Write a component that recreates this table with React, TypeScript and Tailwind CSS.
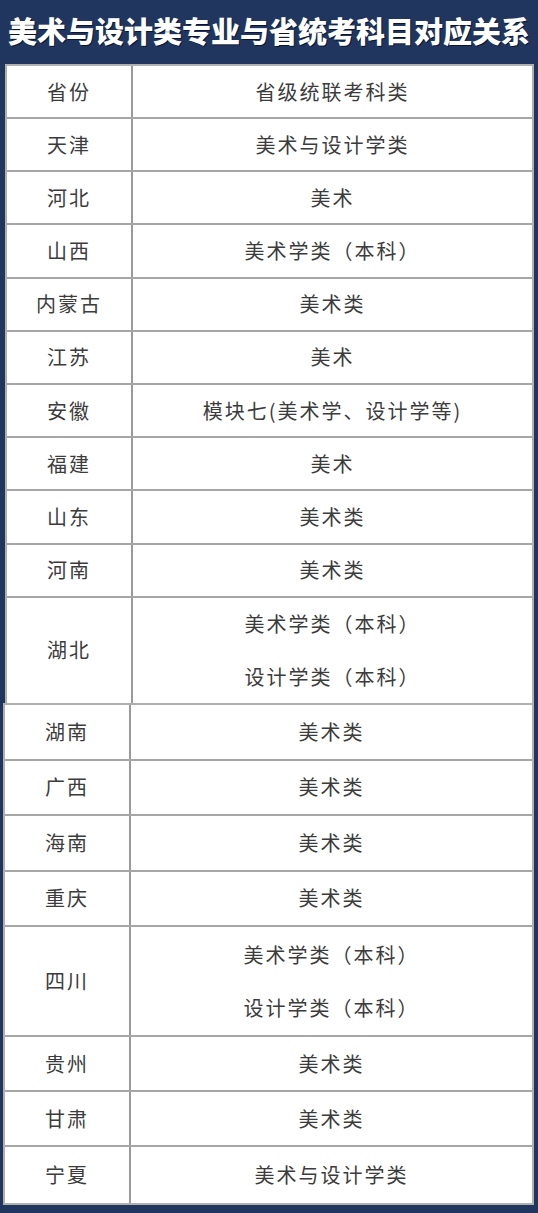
import React from "react";

type Row = { p: string; v: string[]; h: string };

const block1: Row[] = [
  { p: "天津", v: ["美术与设计学类"], h: "h-[53.2px]" },
  { p: "河北", v: ["美术"], h: "h-[53.2px]" },
  { p: "山西", v: ["美术学类（本科）"], h: "h-[53.2px]" },
  { p: "内蒙古", v: ["美术类"], h: "h-[53.2px]" },
  { p: "江苏", v: ["美术"], h: "h-[53.2px]" },
  { p: "安徽", v: ["模块七(美术学、设计学等)"], h: "h-[53.2px]" },
  { p: "福建", v: ["美术"], h: "h-[53.2px]" },
  { p: "山东", v: ["美术类"], h: "h-[53.2px]" },
  { p: "河南", v: ["美术类"], h: "h-[53.2px]" },
  { p: "湖北", v: ["美术学类（本科）", "设计学类（本科）"], h: "h-[105px]" },
];

const block2: Row[] = [
  { p: "湖南", v: ["美术类"], h: "h-[56px]" },
  { p: "广西", v: ["美术类"], h: "h-[55.5px]" },
  { p: "海南", v: ["美术类"], h: "h-[55.5px]" },
  { p: "重庆", v: ["美术类"], h: "h-[55.5px]" },
  { p: "四川", v: ["美术学类（本科）", "设计学类（本科）"], h: "h-[110px]" },
  { p: "贵州", v: ["美术类"], h: "h-[55px]" },
  { p: "甘肃", v: ["美术类"], h: "h-[55px]" },
  { p: "宁夏", v: ["美术与设计学类"], h: "h-[56px]" },
];

const font = { fontFamily: '"Noto Sans CJK SC", "Noto Sans", sans-serif' };

function TRow({ r, last }: { r: Row; last?: boolean }) {
  return (
    <div className={`flex ${r.h} ${last ? "" : "border-b-2 border-[#a6a6a6]"} box-border`}>
      <div className="w-[126px] shrink-0 border-r-2 border-[#9a9a9a] flex items-center justify-center text-[20px] tracking-[2px] text-[#3c3c3c]">
        {r.p}
      </div>
      <div className="flex-1 flex flex-col items-center justify-center gap-[23px] text-[20px] tracking-[2px] text-[#3c3c3c]">
        {r.v.map((t, i) => (
          <div key={i} className="leading-[30px]">{t}</div>
        ))}
      </div>
    </div>
  );
}

export default function App() {
  return (
    <div className="w-[538px] h-[1213px] bg-[#21365f] overflow-hidden" style={font}>
      <div className="h-[64px] flex items-center justify-center">
        <div
          className="text-white font-black text-[29px] leading-none pb-[4px]"
          style={{ textShadow: "1px 1px 0 #0b1530" }}
        >
          美术与设计类专业与省统考科目对应关系
        </div>
      </div>
      <div className="ml-[5px] w-[529px] bg-white border-t-2 border-l-2 border-r-2 border-[#b0b0b0] box-border">
        <div className="flex h-[53px] border-b-2 border-[#a6a6a6] box-border">
          <div className="w-[126px] shrink-0 border-r-2 border-[#9a9a9a] flex items-center justify-center text-[20px] tracking-[2px] text-[#3c3c3c]">
            省份
          </div>
          <div className="flex-1 flex items-center justify-center text-[20px] tracking-[2px] text-[#3c3c3c]">
            省级统联考科类
          </div>
        </div>
        {block1.map((r, i) => (
          <TRow key={i} r={r} last={i === block1.length - 1} />
        ))}
      </div>
      <div className="ml-[3px] w-[531px] bg-white border-2 border-[#b0b0b0] box-border">
        {block2.map((r, i) => (
          <TRow key={i} r={r} last={i === block2.length - 1} />
        ))}
      </div>
    </div>
  );
}
